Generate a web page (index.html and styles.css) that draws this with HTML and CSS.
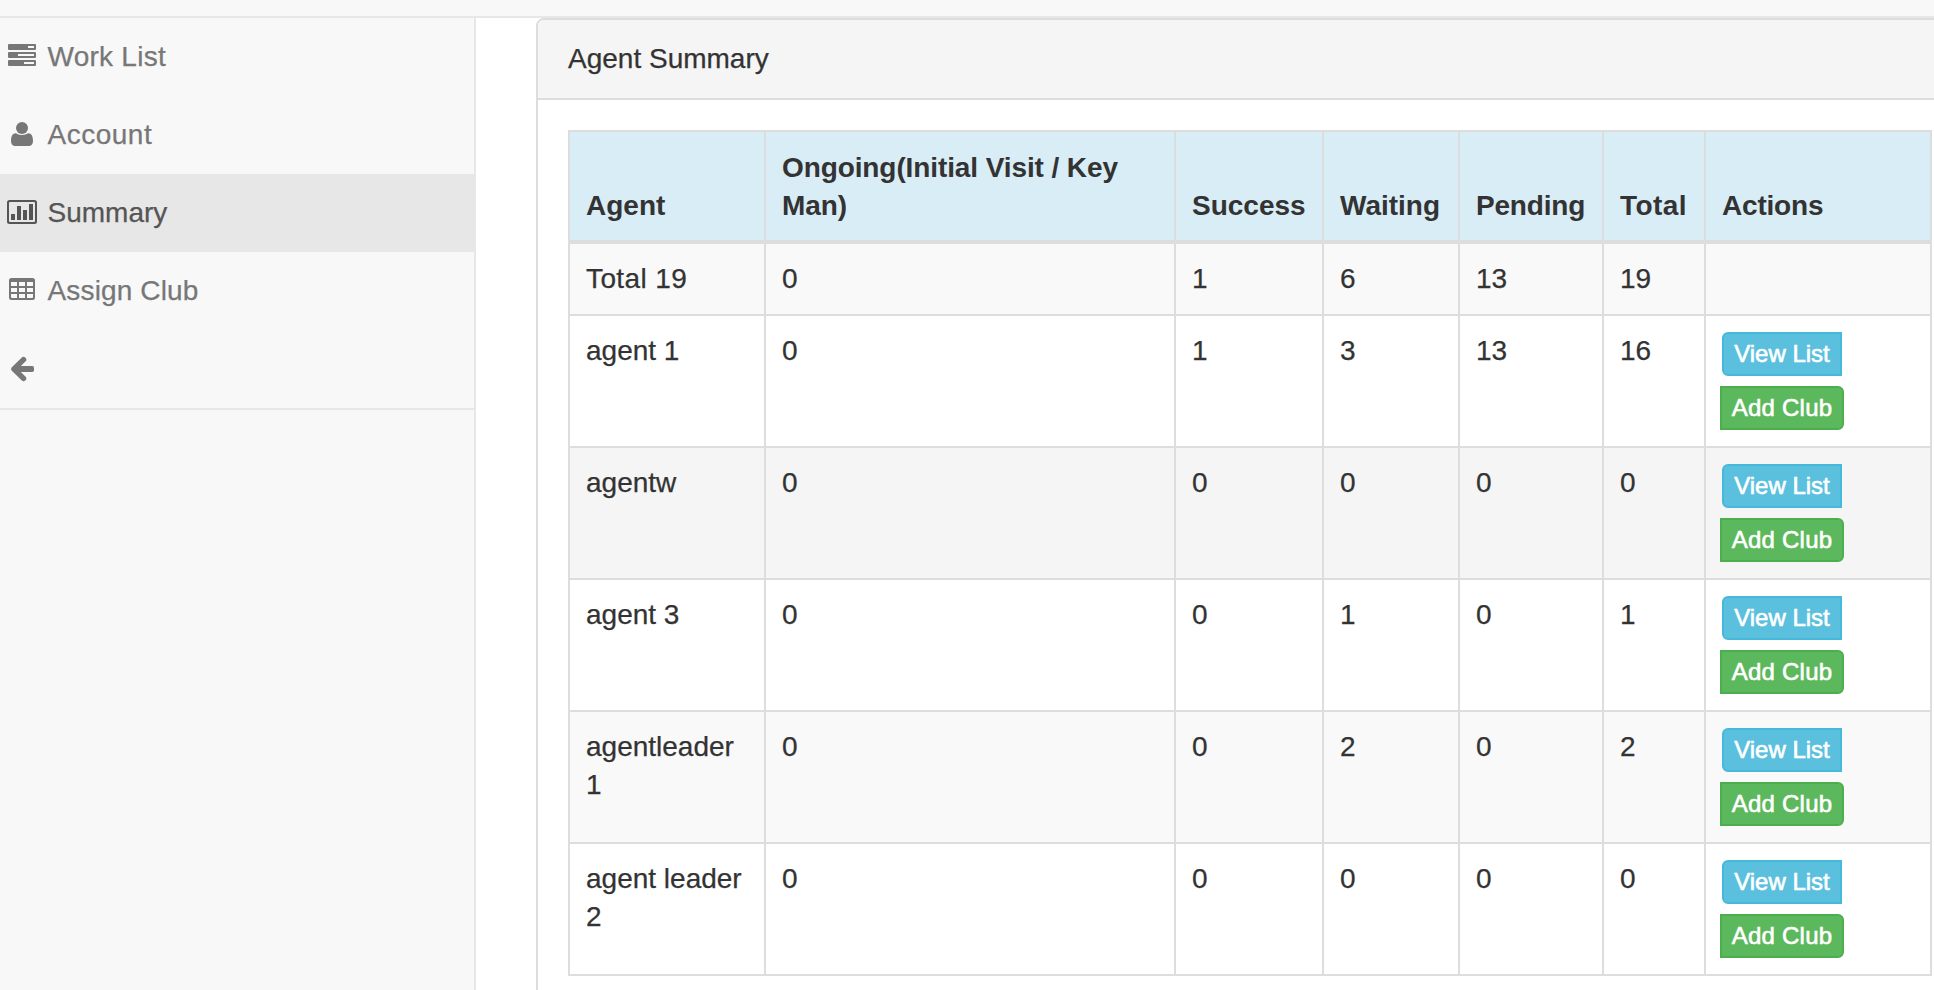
FILE: index.html
```html
<!DOCTYPE html>
<html lang="en">
<head>
<meta charset="utf-8">
<title>Agent Summary</title>
<link rel="stylesheet" href="styles.css">
</head>
<body>
<header class="navbar"></header>
<div class="layout">
  <nav class="sidebar">
    <ul class="menu">
      <li class="menu-item">
        <svg class="icon" viewBox="0 0 36 36"><path fill-rule="evenodd" d="M5 5h26q1 0 1 1v4q0 1-1 1H5q-1 0-1-1V6q0-1 1-1zM24 7v2h6V7zM5 13h26q1 0 1 1v4q0 1-1 1H5q-1 0-1-1v-4q0-1 1-1zM14 15v2h16v-2zM5 21h26q1 0 1 1v4q0 1-1 1H5q-1 0-1-1v-4q0-1 1-1zM20 23v2h10v-2z"/></svg>
        <span class="work">Work List</span>
      </li>
      <li class="menu-item">
        <svg class="icon" viewBox="0 0 36 36"><circle cx="18" cy="11" r="6"/><path d="M11.8 16.2C8.500 16.200 7 19.300 7 23.800C7 27.400 8.800 29 11.500 29H24.500C27.200 29 29 27.400 29 23.800C29 19.300 27.500 16.200 24.200 16.200C23.500 16.200 21.500 18 18 18S12.500 16.200 11.800 16.200z"/></svg>
        <span class="account">Account</span>
      </li>
      <li class="menu-item active">
        <svg class="icon" viewBox="0 0 36 36"><path fill-rule="evenodd" d="M5.500 5h25Q33 5 33 7.500v19Q33 29 30.500 29h-25Q3 29 3 26.500v-19Q3 5 5.500 5zM6 7Q5 7 5 8v18q0 1 1 1h24q1 0 1-1V8q0-1-1-1z"/><path d="M7 19h4v6H7zM13 11h4v14h-4zM19 15h4v10h-4zM25 9h4v16h-4z"/></svg>
        <span class="summary">Summary</span>
      </li>
      <li class="menu-item">
        <svg class="icon" viewBox="0 0 36 36"><path fill-rule="evenodd" d="M7.500 5h21Q31 5 31 7.500v17Q31 27 28.500 27h-21Q5 27 5 24.500v-17Q5 5 7.500 5zM7 9v4h6V9zM15 9v4h6V9zM23 9v4h6V9zM7 15v4h6v-4zM15 15v4h6v-4zM23 15v4h6v-4zM7 21v3q0 1 1 1h5v-4zM15 21v4h6v-4zM23 21v4h5q1 0 1-1v-3z"/></svg>
        <span class="assign">Assign Club</span>
      </li>
      <li class="menu-item">
        <svg class="icon" viewBox="0 0 36 36"><path class="arrow" d="M19.500 8.600L10 18l9.500 9.400"/><path d="M12 15h16.200q1.800 0 1.800 1.800v2.400q0 1.800-1.800 1.800H12z"/></svg>
      </li>
    </ul>
  </nav>
  <main class="content">
    <section class="panel">
      <div class="panel-heading"><span>Agent Summary</span></div>
      <div class="panel-body">
        <table class="agents">
          <colgroup>
            <col class="c-agent"><col class="c-ongoing"><col class="c-success"><col class="c-waiting"><col class="c-pending"><col class="c-total"><col class="c-actions">
          </colgroup>
          <thead>
            <tr><th>Agent</th><th class="ongoing">Ongoing(Initial Visit / Key<br>Man)</th><th>Success</th><th>Waiting</th><th class="pending">Pending</th><th class="total">Total</th><th class="pending">Actions</th></tr>
          </thead>
          <tbody>
            <tr class="totals"><td class="total">Total 19</td><td>0</td><td>1</td><td>6</td><td>13</td><td>19</td><td></td></tr>
            <tr><td>agent 1</td><td>0</td><td>1</td><td>3</td><td>13</td><td>16</td><td><div class="actions"><a class="btn view">View List</a><a class="btn add">Add Club</a></div></td></tr>
            <tr class="hover"><td>agentw</td><td>0</td><td>0</td><td>0</td><td>0</td><td>0</td><td><div class="actions"><a class="btn view">View List</a><a class="btn add">Add Club</a></div></td></tr>
            <tr><td>agent 3</td><td>0</td><td>0</td><td>1</td><td>0</td><td>1</td><td><div class="actions"><a class="btn view">View List</a><a class="btn add">Add Club</a></div></td></tr>
            <tr class="striped"><td>agentleader<br>1</td><td>0</td><td>0</td><td>2</td><td>0</td><td>2</td><td><div class="actions"><a class="btn view">View List</a><a class="btn add">Add Club</a></div></td></tr>
            <tr><td>agent leader<br>2</td><td>0</td><td>0</td><td>0</td><td>0</td><td>0</td><td><div class="actions"><a class="btn view">View List</a><a class="btn add">Add Club</a></div></td></tr>
          </tbody>
        </table>
      </div>
    </section>
  </main>
</div>
</body>
</html>
```

FILE: styles.css
```css
* {
  box-sizing: border-box;
}

body {
  margin: 0;
  height: 990px;
  overflow: hidden;
  background: #fff;
  color: #333;
  font: 28px/38px "Helvetica Neue", "Liberation Sans", Arial, sans-serif;
  -webkit-text-stroke: 0.25px currentColor;
}

.navbar {
  height: 18px;
  background: #f8f8f8;
  border-bottom: 2px solid #e7e7e7;
}

.layout {
  display: flex;
  height: 972px;
}

.sidebar {
  flex: 0 0 476px;
  background: #f8f8f8;
  border-right: 2px solid #e7e7e7;
}

.menu {
  margin: 0;
  padding: 0;
  list-style: none;
  border-bottom: 2px solid #e7e7e7;
}

.menu-item {
  display: flex;
  align-items: center;
  gap: 7.5px;
  height: 78px;
  padding-left: 4px;
  color: #777;
}

.menu-item.active {
  background: #e7e7e7;
  color: #555;
}

.work { letter-spacing: 0.25px; }
.account { letter-spacing: 0.5px; }
.assign { letter-spacing: 0.15px; }

.icon {
  flex: none;
  width: 36px;
  height: 36px;
  fill: currentColor;
}

.arrow {
  fill: none;
  stroke: currentColor;
  stroke-width: 5.5;
  stroke-linecap: round;
  stroke-linejoin: round;
}

.content {
  flex: 1;
  min-width: 0;
  padding-left: 60px;
  overflow: hidden;
}

.panel {
  width: 1428px;
  height: 1040px;
  border: 2px solid #ddd;
  border-radius: 8px;
  overflow: hidden;
  background: #fff;
}

.panel-heading {
  height: 80px;
  padding: 20px 30px;
  background: #f5f5f5;
  border-bottom: 2px solid #ddd;
}

.panel-body {
  padding: 30px;
}

.agents {
  width: 1364px;
  table-layout: fixed;
  border-collapse: separate;
  border-spacing: 0;
  border-top: 2px solid #ddd;
  border-left: 2px solid #ddd;
}

.c-agent { width: 196px; }
.c-ongoing { width: 410px; }
.c-success { width: 148px; }
.c-waiting { width: 136px; }
.c-pending { width: 144px; }
.c-total { width: 102px; }
.c-actions { width: 226px; }

th,
td {
  padding: 16px 0 16px 16px;
  border-right: 2px solid #ddd;
  border-bottom: 2px solid #ddd;
  text-align: left;
  vertical-align: top;
  white-space: nowrap;
}

th {
  padding-top: 17px;
  padding-bottom: 15px;
  background: #d9edf7;
  border-bottom-width: 4px;
  vertical-align: bottom;
  -webkit-text-stroke: 0;
}

.ongoing { letter-spacing: -0.1px; }
.pending { letter-spacing: -0.2px; }
.total { letter-spacing: 0.4px; }

.totals,
.striped {
  background: #f9f9f9;
}

.hover {
  background: #f5f5f5;
}

.actions {
  display: flex;
  flex-direction: column;
  align-items: flex-start;
  gap: 10px;
}

.btn {
  height: 44px;
  border: 2px solid;
  color: #fff;
  font-size: 24px;
  line-height: 40px;
  text-align: center;
  -webkit-text-stroke: 0.6px #fff;
}

.view {
  width: 120px;
  background: #5bc0de;
  border-color: #46b8da;
  border-radius: 6px 0 0 6px;
}

.add {
  width: 124px;
  margin-left: -2px;
  background: #5cb85c;
  border-color: #4cae4c;
  border-radius: 0 6px 6px 0;
  letter-spacing: 0.25px;
}
```
